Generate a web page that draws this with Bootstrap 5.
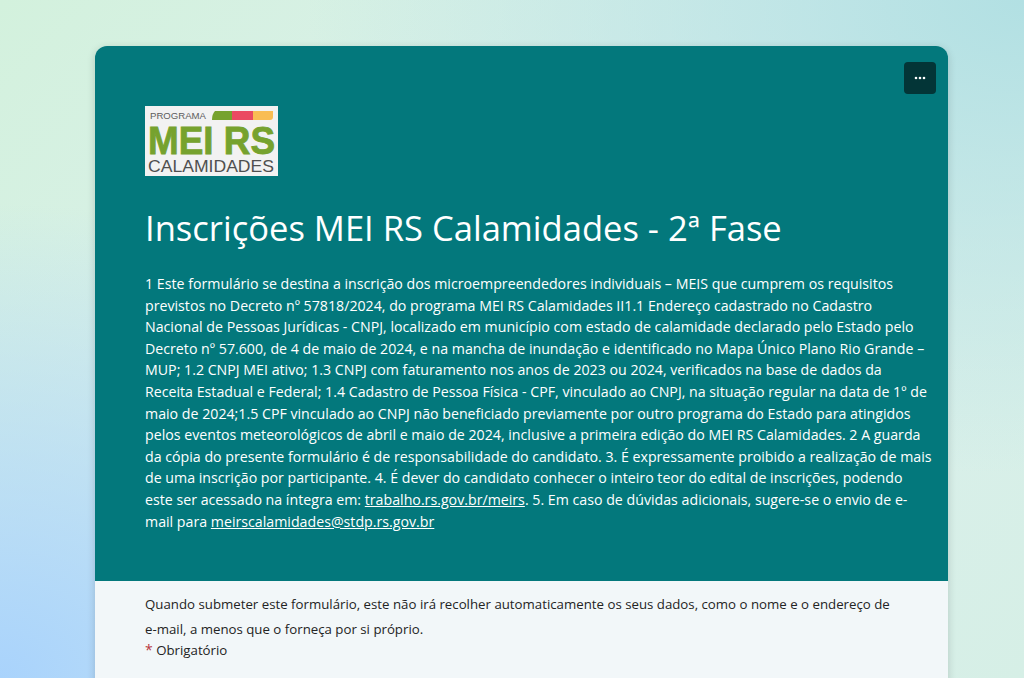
<!DOCTYPE html>
<html lang="pt"><head><meta charset="utf-8"><title>Inscrições MEI RS Calamidades</title>
<link href="https://cdn.jsdelivr.net/npm/bootstrap@5.3.0/dist/css/bootstrap.min.css" rel="stylesheet">
<style>
html,body{height:100%;overflow:hidden}
body{font-family:"Open Sans","Noto Sans","Liberation Sans",sans-serif;background-color:#d6efe6;background-image:radial-gradient(ellipse 60% 70% at 0% 100%,#a9d3fc 0%,rgba(169,211,252,0) 100%),radial-gradient(ellipse 70% 70% at 100% 0%,#b2e0e3 0%,rgba(178,224,227,0) 100%),linear-gradient(135deg,#d3f1dd 0%,#dcf0ee 50%,#d6efe6 100%)}
.form-shell{width:853px;margin:46px 0 0 95px;border-radius:12px;overflow:hidden;box-shadow:0 2px 8px rgba(0,0,0,.16);position:relative}
.form-head{background:#03787c;color:#fff;padding:60px 50px 51px;height:535px}
.logo-svg{display:block;width:133px;height:70px}
.form-name{font-size:34.55px;font-weight:400;line-height:44px;margin:30px 0 23px;white-space:nowrap}
.form-desc{font-size:14.2px;line-height:21.6px;margin:0;white-space:nowrap}
.form-desc a{color:#fff}
.more-btn{position:absolute;top:16px;right:12px;width:32px;height:32px;border:0;padding:0;border-radius:4px;background:#033537}
.form-foot{background:#f2f7f9;color:#242424;padding:10.5px 50px 40px;font-size:13.26px;height:120px;white-space:nowrap}
.notice{line-height:25px;margin:0}
.req-line{line-height:16px;margin:0}
.req-star{color:#b83a3f;font-size:14px}
</style></head><body>
<main class="form-shell">
<button class="more-btn d-flex align-items-center justify-content-center" aria-label="Mais opções"><svg width="12" height="4" viewBox="0 0 12 4"><circle cx="2" cy="2" r="1.3" fill="#fff"/><circle cx="6" cy="2" r="1.3" fill="#fff"/><circle cx="10" cy="2" r="1.3" fill="#fff"/></svg></button>
<header class="form-head">
<svg class="logo-svg" viewBox="0 0 133 70" role="img" aria-label="Programa MEI RS Calamidades">
<rect width="133" height="70" fill="#f2f2f2"/>
<text x="5" y="13" font-family="Liberation Sans" font-size="9" fill="#5d5d5d" textLength="56" lengthAdjust="spacingAndGlyphs">PROGRAMA</text>
<path d="M70 5h17v9H67q0-6 3-9z" fill="#76a22e"/><rect x="87" y="5" width="21" height="9" fill="#ea4a62"/><path d="M108 5h20v6q0 3-3 3h-17z" fill="#f9bd53"/>
<text transform="translate(3 48) scale(1 1.1)" font-family="Liberation Sans" font-weight="700" font-size="36" fill="#76a22e" stroke="#76a22e" stroke-width=".8" textLength="127" lengthAdjust="spacingAndGlyphs">MEI RS</text>
<text x="3" y="66" font-family="Liberation Sans" font-size="16.5" fill="#4f4f4f" textLength="126" lengthAdjust="spacingAndGlyphs">CALAMIDADES</text>
</svg>
<h1 class="form-name">Inscrições MEI RS Calamidades - 2ª Fase</h1>
<p class="form-desc">1 Este formulário se destina a inscrição dos microempreendedores individuais – MEIS que cumprem os requisitos<br>previstos no Decreto nº 57818/2024, do programa MEI RS Calamidades II1.1 Endereço cadastrado no Cadastro<br>Nacional de Pessoas Jurídicas - CNPJ, localizado em município com estado de calamidade declarado pelo Estado pelo<br>Decreto nº 57.600, de 4 de maio de 2024, e na mancha de inundação e identificado no Mapa Único Plano Rio Grande –<br>MUP; 1.2 CNPJ MEI ativo; 1.3 CNPJ com faturamento nos anos de 2023 ou 2024, verificados na base de dados da<br>Receita Estadual e Federal; 1.4 Cadastro de Pessoa Física - CPF, vinculado ao CNPJ, na situação regular na data de 1º de<br>maio de 2024;1.5 CPF vinculado ao CNPJ não beneficiado previamente por outro programa do Estado para atingidos<br>pelos eventos meteorológicos de abril e maio de 2024, inclusive a primeira edição do MEI RS Calamidades. 2 A guarda<br>da cópia do presente formulário é de responsabilidade do candidato. 3. É expressamente proibido a realização de mais<br>de uma inscrição por participante. 4. É dever do candidato conhecer o inteiro teor do edital de inscrições, podendo<br>este ser acessado na íntegra em: <a href="#">trabalho.rs.gov.br/meirs</a>. 5. Em caso de dúvidas adicionais, sugere-se o envio de e-<br>mail para <a href="#">meirscalamidades@stdp.rs.gov.br</a></p>
</header>
<section class="form-foot">
<p class="notice">Quando submeter este formulário, este não irá recolher automaticamente os seus dados, como o nome e o endereço de<br>e-mail, a menos que o forneça por si próprio.</p>
<p class="req-line"><span class="req-star">*</span> Obrigatório</p>
</section>
</main>
<script src="https://cdn.jsdelivr.net/npm/bootstrap@5.3.0/dist/js/bootstrap.bundle.min.js"></script>
</body></html>
